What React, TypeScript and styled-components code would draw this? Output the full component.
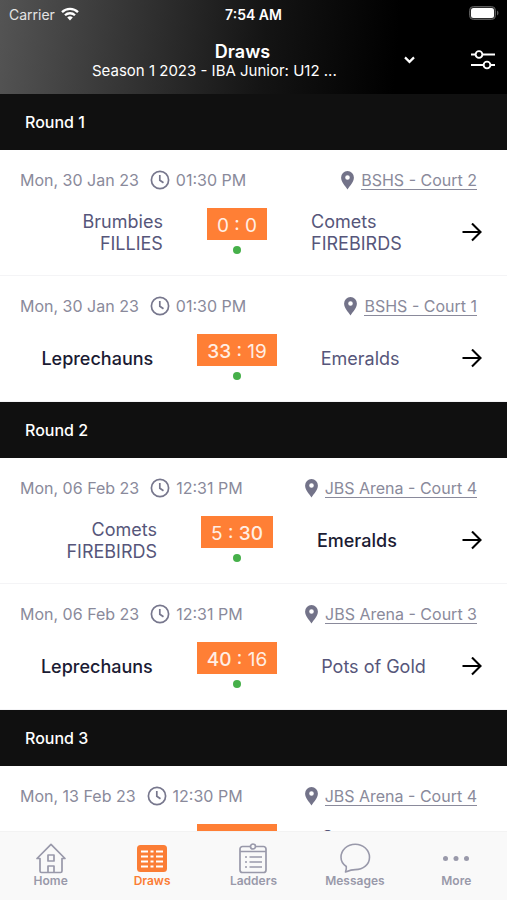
import React from 'react';
import styled, { createGlobalStyle } from 'styled-components';

const Global = createGlobalStyle`
  * { box-sizing: border-box; }
  body { margin: 0; background: #fff; font-family: Inter, "Liberation Sans", sans-serif; }
  button { font: inherit; border: 0; background: none; padding: 0; cursor: pointer; }
  svg { display: block; flex: none; }
`;

const Screen = styled.div`
  display: flex;
  flex-direction: column;
  height: 100vh;
  overflow: hidden;
`;

const Top = styled.header`
  flex: none;
  padding: 0 8px 14px;
  color: #fff;
  background: linear-gradient(95deg, #545454 0%, #343434 26%, #141414 52%, #000 78%);
`;

const StatusBar = styled.div`
  display: grid;
  grid-template-columns: 1fr auto 1fr;
  align-items: center;
  height: 28px;
  font-size: 14px;
`;

const Carrier = styled.div`
  display: flex;
  align-items: center;
  gap: 6px;
  padding-left: 1px;
  color: #e4e4e4;
`;

const Clock = styled.span`
  font-weight: 600;
`;

const Battery = styled.div`
  justify-self: end;
`;

const TitleBar = styled.div`
  display: grid;
  grid-template-columns: 32px 1fr 32px;
  align-items: center;
  padding-top: 13px;
`;

const SeasonButton = styled.button`
  grid-column: 2;
  justify-self: center;
  display: flex;
  align-items: center;
  gap: 11px;
  color: #fff;
`;

const TitleStack = styled.span`
  display: flex;
  flex-direction: column;
  width: 301px;
`;

const Title = styled.span`
  font-size: 18px;
  line-height: 21px;
  font-weight: 600;
  text-align: center;
`;

const Subtitle = styled.span`
  font-size: 15px;
  line-height: 18px;
  font-weight: 400;
  text-align: left;
  white-space: nowrap;
`;

const FilterButton = styled.button`
  justify-self: center;
  color: #fff;
`;

const List = styled.main`
  flex: 1;
  min-height: 0;
  overflow: hidden;
`;

const RoundTitle = styled.h2`
  margin: 0;
  padding: 0 25px;
  font-size: 16px;
  line-height: 56px;
  font-weight: 500;
  color: #fff;
  background: #101010;
`;

const Match = styled.article`
  height: 126px;
  padding: 18px 25px 0 20px;
  background: #fff;
  border-bottom: 1px solid #f4f4f6;
`;

const Meta = styled.div`
  display: flex;
  align-items: center;
  height: 24px;
  font-size: 16px;
  color: #8a8a9b;
`;

const Time = styled.span`
  display: flex;
  align-items: center;
  gap: 6px;
  margin-left: 11px;
`;

const Venue = styled.a`
  display: flex;
  align-items: center;
  gap: 7px;
  margin: 0 5px 0 auto;
  color: #8a8a9b;
  text-decoration: none;
  white-space: nowrap;
`;

const VenueName = styled.span`
  line-height: 18px;
  border-bottom: 1px solid #8a8a9b;
`;

const Result = styled.div`
  display: grid;
  grid-template-columns: 1fr auto 1fr 28px;
  align-items: center;
  height: 50px;
  margin-top: 16px;
`;

const Team = styled.span<{ $side: 'home' | 'away'; $won: boolean }>`
  font-size: 18px;
  line-height: 22px;
  padding: ${p => (p.$side === 'home' ? '0 44px 0 0' : '0 0 0 44px')};
  text-align: ${p => (p.$side === 'home' ? 'right' : 'left')};
  font-weight: ${p => (p.$won ? 500 : 400)};
  color: ${p => (p.$won ? '#1b1b33' : '#56567a')};
`;

const ScoreColumn = styled.div`
  display: flex;
  flex-direction: column;
  align-items: center;
  align-self: start;
  gap: 6px;
`;

const Score = styled.div`
  padding: 4px 10px 0;
  font-size: 19px;
  line-height: 28px;
  color: #ffeee4;
  background: #ff7f35;
  white-space: nowrap;
`;

const Points = styled.span<{ $won: boolean }>`
  font-weight: ${p => (p.$won ? 500 : 400)};
`;

const Dot = styled.span`
  width: 8px;
  height: 8px;
  border-radius: 50%;
  background: #46b04a;
`;

const OpenButton = styled.button`
  justify-self: end;
`;

const Tabs = styled.nav`
  flex: none;
  display: grid;
  grid-template-columns: repeat(5, 1fr);
  height: 69px;
  background: #f9f9f9;
  border-top: 1px solid #f3f3f3;
`;

const Tab = styled.a<{ $active?: boolean }>`
  display: flex;
  flex-direction: column;
  align-items: center;
  padding-top: 10px;
  font-size: 12px;
  line-height: 14px;
  font-weight: 600;
  text-decoration: none;
  color: ${p => (p.$active ? '#fb7d35' : '#9999aa')};
`;

const WifiIcon = () => (
  <svg width="18" height="14" viewBox="0 0 18 14" fill="none" stroke="#fff" strokeWidth="2.3">
    <path d="M1 5.1a11.4 11.4 0 0 1 16 0" />
    <path d="M4 8.3a7.1 7.1 0 0 1 10 0" />
    <path d="M9 13.4 6.2 10.6a4 4 0 0 1 5.6 0Z" fill="#fff" stroke="none" />
  </svg>
);

const BatteryIcon = () => (
  <svg width="30" height="16" viewBox="0 0 30 16">
    <rect x="0.5" y="0.5" width="26" height="13" rx="4" fill="#2c2c2c" stroke="#5c5c5c" />
    <rect x="2" y="2" width="23" height="10" rx="2.500" fill="#fff" />
    <path d="M28 4.500v5c2-1 2-4 0-5Z" fill="#5c5c5c" />
  </svg>
);

const ChevronIcon = () => (
  <svg width="11" height="10" viewBox="0 0 11 10" fill="none" stroke="currentColor" strokeWidth="2.2">
    <path d="m1 1.4 4.5 4.5L10 1.4" />
  </svg>
);

const FilterIcon = () => (
  <svg width="24" height="22" viewBox="0 0 24 22" fill="none" stroke="currentColor" strokeWidth="1.9">
    <path d="M0 4.500h4.500M11.500 4.500H24M0 15h12.500M19.500 15H24" />
    <circle cx="8" cy="4.500" r="3.400" />
    <circle cx="16" cy="15" r="3.400" />
  </svg>
);

const ClockIcon = () => (
  <svg width="20" height="20" viewBox="0 0 20 20" fill="none" stroke="#77778d" strokeWidth="1.7">
    <circle cx="10" cy="10" r="8.600" />
    <path d="M9.800 5v5.200l3.700 2.600" />
  </svg>
);

const PinIcon = () => (
  <svg width="13" height="19" viewBox="0 0 13 19">
    <path
      fill="#737389"
      fillRule="evenodd"
      d="M6.500 0A6.400 6.400 0 0 0 .1 6.500C.1 11 4 14.500 6.500 18.500 9 14.500 12.900 11 12.900 6.500A6.400 6.400 0 0 0 6.500 0Zm0 4.200a2.300 2.300 0 1 1 0 4.600 2.300 2.300 0 0 1 0-4.600Z"
    />
  </svg>
);

const ArrowIcon = () => (
  <svg width="20" height="20" viewBox="0 0 20 20" fill="none" stroke="#000" strokeWidth="2.100">
    <path d="M.5 9H18.500M10 .5 18.500 9 10 17.500" />
  </svg>
);

const HomeIcon = () => (
  <svg width="32" height="32" viewBox="0 0 32 32" fill="none" stroke="currentColor" strokeWidth="1.700" strokeLinejoin="round" strokeLinecap="round">
    <path d="M2 16.500 16 2.300l14 14.200H27V29a1.500 1.500 0 0 1-1.500 1.500h-19A1.500 1.500 0 0 1 5 29V16.500Z" />
    <rect x="13" y="13" width="6" height="6" />
    <path d="M13 30v-6h6v6" />
  </svg>
);

const DrawsIcon = () => (
  <svg width="32" height="32" viewBox="0 0 32 32">
    <rect x="1" y="3" width="30" height="27" rx="3.500" fill="currentColor" />
    <path d="M5 9.500h7M14.500 9.500h3M20 9.500h7M5 14.500h7M14.500 14.500h3M20 14.500h7M5 19.500h7M14.500 19.500h3M20 19.500h7M5 24.500h7M14.500 24.500h3M20 24.500h7" stroke="#fff" strokeWidth="2" />
  </svg>
);

const LaddersIcon = () => (
  <svg width="32" height="32" viewBox="0 0 32 32" fill="none" stroke="currentColor" strokeWidth="1.700">
    <path d="M13 4.500H5.500a2.500 2.500 0 0 0-2.500 2.500V28a2.500 2.500 0 0 0 2.500 2.500h21A2.500 2.500 0 0 0 29 28V7a2.500 2.500 0 0 0-2.500-2.500H19M3 9.500h26" />
    <circle cx="16" cy="4.500" r="2.500" />
    <path d="M8 15h2M8 20h2M8 25h2M12.500 15H25M12.500 20H25M12.500 25H25" />
  </svg>
);

const MessagesIcon = () => (
  <svg width="32" height="32" viewBox="0 0 32 32" fill="none" stroke="currentColor" strokeWidth="1.600" strokeLinejoin="round">
    <path d="M6.500 30c.7-1.800 1-3.700.8-5.500C3.800 22.200 2 19 2 15.300 2 8 8.300 2.200 16.200 2.200S30.500 8 30.500 15.300s-6.300 12.300-14.300 12.300C12.800 27.600 9.800 28.700 6.500 30Z" />
  </svg>
);

const MoreIcon = () => (
  <svg width="32" height="32" viewBox="0 0 32 32" fill="currentColor">
    <circle cx="5.500" cy="16.500" r="2.500" />
    <circle cx="16" cy="16.500" r="2.500" />
    <circle cx="26.500" cy="16.500" r="2.500" />
  </svg>
);

type Game = { date: string; time: string; venue: string; home: string; away: string; score: [number, number] };

const rounds: { name: string; games: Game[] }[] = [
  {
    name: 'Round 1',
    games: [
      { date: 'Mon, 30 Jan 23', time: '01:30 PM', venue: 'BSHS - Court 2', home: 'Brumbies FILLIES', away: 'Comets FIREBIRDS', score: [0, 0] },
      { date: 'Mon, 30 Jan 23', time: '01:30 PM', venue: 'BSHS - Court 1', home: 'Leprechauns', away: 'Emeralds', score: [33, 19] },
    ],
  },
  {
    name: 'Round 2',
    games: [
      { date: 'Mon, 06 Feb 23', time: '12:31 PM', venue: 'JBS Arena - Court 4', home: 'Comets FIREBIRDS', away: 'Emeralds', score: [5, 30] },
      { date: 'Mon, 06 Feb 23', time: '12:31 PM', venue: 'JBS Arena - Court 3', home: 'Leprechauns', away: 'Pots of Gold', score: [40, 16] },
    ],
  },
  {
    name: 'Round 3',
    games: [
      { date: 'Mon, 13 Feb 23', time: '12:30 PM', venue: 'JBS Arena - Court 4', home: 'Leprechauns', away: 'Comets FIREBIRDS', score: [38, 12] },
    ],
  },
];

const tabs = [
  { label: 'Home', icon: <HomeIcon /> },
  { label: 'Draws', icon: <DrawsIcon />, active: true },
  { label: 'Ladders', icon: <LaddersIcon /> },
  { label: 'Messages', icon: <MessagesIcon /> },
  { label: 'More', icon: <MoreIcon /> },
];

function MatchRow({ game }: { game: Game }) {
  const [h, a] = game.score;
  return (
    <Match>
      <Meta>
        <span>{game.date}</span>
        <Time><ClockIcon />{game.time}</Time>
        <Venue href="#venue"><PinIcon /><VenueName>{game.venue}</VenueName></Venue>
      </Meta>
      <Result>
        <Team $side="home" $won={h > a}>{game.home}</Team>
        <ScoreColumn>
          <Score><Points $won={h > a}>{h}</Points> : <Points $won={a > h}>{a}</Points></Score>
          <Dot />
        </ScoreColumn>
        <Team $side="away" $won={a > h}>{game.away}</Team>
        <OpenButton aria-label="Open match"><ArrowIcon /></OpenButton>
      </Result>
    </Match>
  );
}

export default function App() {
  return (
    <Screen>
      <Global />
      <Top>
        <StatusBar>
          <Carrier>Carrier<WifiIcon /></Carrier>
          <Clock>7:54 AM</Clock>
          <Battery><BatteryIcon /></Battery>
        </StatusBar>
        <TitleBar>
          <SeasonButton>
            <TitleStack>
              <Title>Draws</Title>
              <Subtitle>Season 1 2023 - IBA Junior: U12 ...</Subtitle>
            </TitleStack>
            <ChevronIcon />
          </SeasonButton>
          <FilterButton aria-label="Filter"><FilterIcon /></FilterButton>
        </TitleBar>
      </Top>
      <List>
        {rounds.map(round => (
          <section key={round.name}>
            <RoundTitle>{round.name}</RoundTitle>
            {round.games.map((game, i) => <MatchRow key={i} game={game} />)}
          </section>
        ))}
      </List>
      <Tabs>
        {tabs.map(t => (
          <Tab key={t.label} href="#" $active={t.active}>{t.icon}{t.label}</Tab>
        ))}
      </Tabs>
    </Screen>
  );
}
